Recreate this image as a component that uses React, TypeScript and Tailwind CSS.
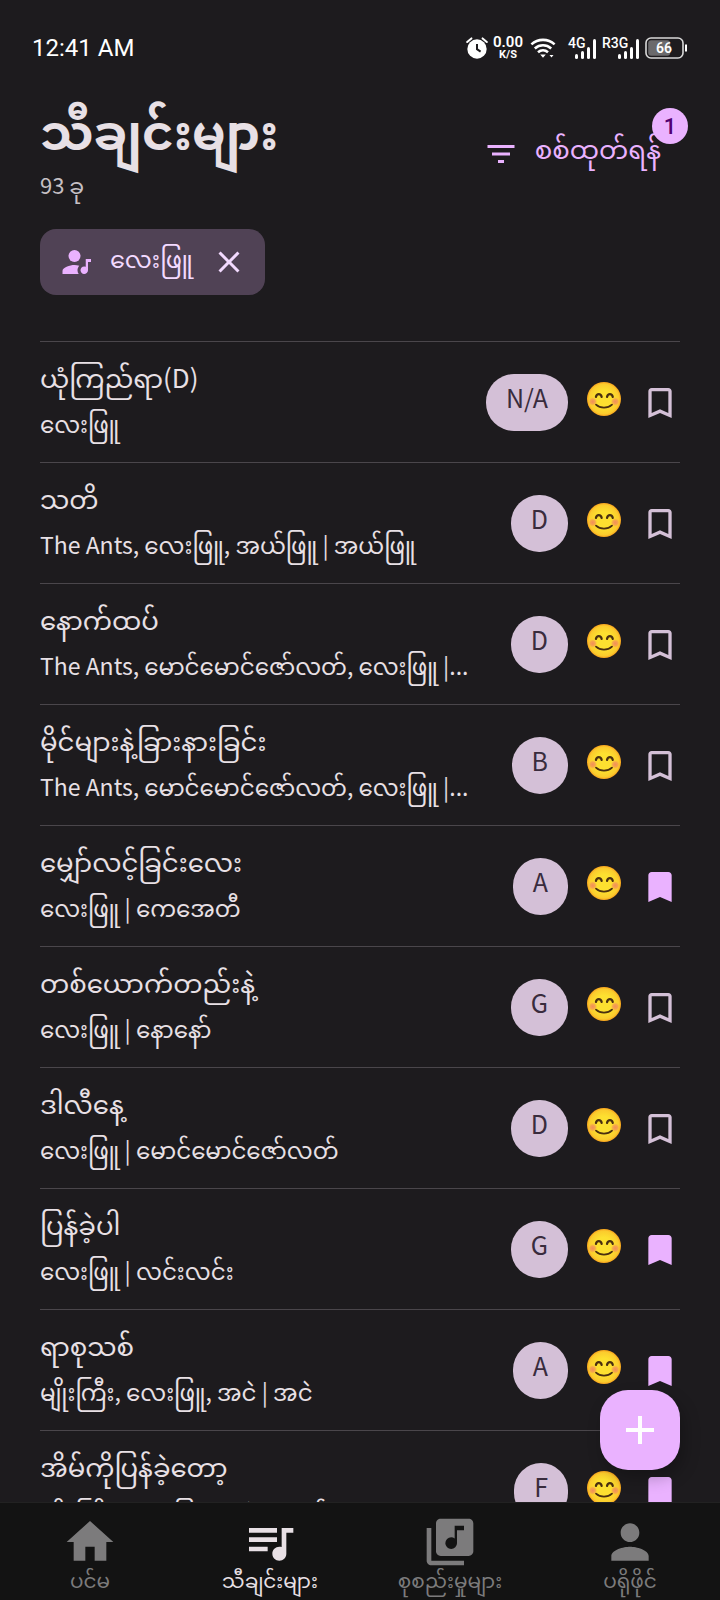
import { MdAdd, MdBookmark, MdBookmarkBorder, MdClose, MdFilterList, MdHome, MdLibraryMusic, MdPerson, MdQueueMusic } from 'react-icons/md';
import type { IconType } from 'react-icons';
import { useState } from 'react';
import clsx from 'clsx';

type Song = {
  id: number;
  title: string;
  artists: string;
  songKey: string;
  saved?: boolean;
};

const SONGS: Song[] = [
  { id: 1, title: 'ယုံကြည်ရာ(D)', artists: 'လေးဖြူ', songKey: 'N/A' },
  { id: 2, title: 'သတိ', artists: 'The Ants, လေးဖြူ, အယ်ဖြူ | အယ်ဖြူ', songKey: 'D' },
  { id: 3, title: 'နောက်ထပ်', artists: 'The Ants, မောင်မောင်ဇော်လတ်, လေးဖြူ |...', songKey: 'D' },
  { id: 4, title: 'မိုင်များနဲ့ခြားနားခြင်း', artists: 'The Ants, မောင်မောင်ဇော်လတ်, လေးဖြူ |...', songKey: 'B' },
  { id: 5, title: 'မျှော်လင့်ခြင်းလေး', artists: 'လေးဖြူ | ကေအေတီ', songKey: 'A', saved: true },
  { id: 6, title: 'တစ်ယောက်တည်းနဲ့', artists: 'လေးဖြူ | နောနော်', songKey: 'G' },
  { id: 7, title: 'ဒါလီနေ့', artists: 'လေးဖြူ | မောင်မောင်ဇော်လတ်', songKey: 'D' },
  { id: 8, title: 'ပြန်ခဲ့ပါ', artists: 'လေးဖြူ | လင်းလင်း', songKey: 'G', saved: true },
  { id: 9, title: 'ရာစုသစ်', artists: 'မျိုးကြီး, လေးဖြူ, အငဲ | အငဲ', songKey: 'A', saved: true },
  { id: 10, title: 'အိမ်ကိုပြန်ခဲ့တော့', artists: 'မျိုးကြီး, လေးဖြူ, အငဲ | မောင်', songKey: 'F', saved: true },
];

const TABS: { label: string; Icon: IconType }[] = [
  { label: 'ပင်မ', Icon: MdHome },
  { label: 'သီချင်းများ', Icon: MdQueueMusic },
  { label: 'စုစည်းမှုများ', Icon: MdLibraryMusic },
  { label: 'ပရိုဖိုင်', Icon: MdPerson },
];

function StatusBar() {
  return (
    <div className="flex h-24 shrink-0 items-center justify-between px-8 font-['Roboto',sans-serif] text-white">
      <span className="text-2xl">12:41 AM</span>
      <div className="flex items-center">
        <svg viewBox="0 0 22 22" className="h-[22px] w-[22px]" aria-hidden="true">
          <circle cx="11" cy="12" r="9.7" fill="#fff" />
          <path d="M1.2 5 5.4 1.4M20.8 5 16.6 1.4" stroke="#fff" strokeWidth="2" strokeLinecap="round" />
          <path d="M11 7v5.2l3.6 2.4" fill="none" stroke="#1d1b1e" strokeWidth="2" />
        </svg>
        <div className="ml-1.5 flex w-7 flex-col items-center text-[15px] leading-[14px] font-semibold">
          <span>0.00</span>
          <span className="text-[11px] leading-3 font-bold">K/S</span>
        </div>
        <svg viewBox="0 0 26 22" className="ml-2 h-[22px] w-[26px]" fill="none" stroke="#fff" strokeWidth="2.6" aria-hidden="true">
          <path d="M1.4 7.4c6.6-6 16.6-6 23.2 0M4.8 11.4c4.8-4.2 11.6-4.2 16.4 0M8 15.2c3-2.6 7-2.6 10 0" />
          <path d="M10.2 17.6h5.6L13 20.8zM19.5 18h4l-2 2.6z" fill="#fff" stroke="none" />
        </svg>
        <Signal label="4G" className="ml-3 w-7" />
        <Signal label="R3G" className="ml-1.5 w-[37px]" />
        <svg viewBox="0 0 43 22" className="ml-1.5 h-[22px] w-[43px]" aria-hidden="true">
          <rect x="1" y="1" width="37" height="20" rx="5" fill="none" stroke="#d8d8d8" strokeWidth="1.6" />
          <rect x="3.2" y="3.2" width="22" height="15.6" rx="3" fill="#6b6a6c" />
          <rect x="40" y="7.5" width="2" height="7" fill="#fff" />
          <text x="19" y="16" textAnchor="middle" fill="#fff" fontSize="14" fontWeight="600">66</text>
        </svg>
      </div>
    </div>
  );
}

function Signal({ label, className }: { label: string; className: string }) {
  return (
    <div className={clsx('relative flex h-[22px] items-end justify-end gap-[3px]', className)}>
      <span className="absolute top-0 left-0 text-sm leading-3 font-medium">{label}</span>
      <span className="h-[5px] w-[3px] rounded-sm bg-white" />
      <span className="h-2 w-[3px] rounded-sm bg-white" />
      <span className="h-3 w-[3px] rounded-sm bg-white" />
      <span className="h-5 w-[3px] rounded-sm bg-white" />
    </div>
  );
}

function AccountMusicIcon() {
  return (
    <svg viewBox="0 0 24 24" className="h-9 w-9 fill-[#eab2ff]" aria-hidden="true">
      <path d="M11 14c1 0 2.05.16 3.2.44-.81.87-1.2 1.89-1.2 3.06 0 .89.25 1.73.78 2.5H3v-2c0-1.19.91-2.15 2.74-2.88C7.57 14.38 9.33 14 11 14Z" />
      <circle cx="11" cy="8" r="4" />
      <path d="M18.5 10H22v2h-2v5.5a2.5 2.5 0 1 1-1.5-2.29V10Z" />
    </svg>
  );
}

function SmileIcon() {
  return (
    <svg viewBox="0 0 34 34" className="h-[34px] w-[34px]" role="img" aria-label="Easy">
      <defs>
        <radialGradient id="smile-face" cx="50%" cy="50%" r="50%">
          <stop offset="0.5" stopColor="#fde030" />
          <stop offset="0.88" stopColor="#fbcb2d" />
          <stop offset="1" stopColor="#f6a11d" />
        </radialGradient>
        <radialGradient id="smile-blush">
          <stop offset="0" stopColor="#ef7a66" stopOpacity="0.8" />
          <stop offset="0.6" stopColor="#f28a5c" stopOpacity="0.6" />
          <stop offset="1" stopColor="#f9a84a" stopOpacity="0" />
        </radialGradient>
      </defs>
      <circle cx="17" cy="17" r="17" fill="url(#smile-face)" />
      <circle cx="5.8" cy="19.5" r="4.4" fill="url(#smile-blush)" />
      <circle cx="28.2" cy="19.5" r="4.4" fill="url(#smile-blush)" />
      <path
        d="M8.9 14.9c.8-3.8 5-3.8 5.8 0M20 14.9c.8-3.8 5-3.8 5.8 0"
        fill="none"
        stroke="#4a2f10"
        strokeWidth="2.2"
        strokeLinecap="round"
      />
      <path d="M9 22.6c4.4 4 11.6 4 16 0" fill="none" stroke="#4a2f10" strokeWidth="1.8" strokeLinecap="round" />
    </svg>
  );
}

function SongRow({ song }: { song: Song }) {
  const [saved, setSaved] = useState(Boolean(song.saved));
  const Bookmark = saved ? MdBookmark : MdBookmarkBorder;

  return (
    <li className="flex h-[121px] shrink-0 items-center border-t border-[#4a464b]">
      <div className="min-w-0 flex-1 pb-1">
        <h2 className="truncate text-[26px] leading-[48px]">{song.title}</h2>
        <p className="-mt-0.5 truncate text-[23px] leading-[48px]">{song.artists}</p>
      </div>
      <span className="ml-4 flex h-[57px] shrink-0 items-center rounded-[28px] bg-[#d4c0d7] px-5 pb-2 text-[25px] text-[#392c3d]">
        {song.songKey}
      </span>
      <span className="ml-[19px] shrink-0 pb-1.5">
        <SmileIcon />
      </span>
      <button
        type="button"
        aria-label="Bookmark"
        aria-pressed={saved}
        onClick={() => setSaved(!saved)}
        className="ml-[19px] shrink-0 pt-0.5"
      >
        <Bookmark className={clsx('h-10 w-10', saved ? 'text-[#eab2ff]' : 'text-[#d4c0d7]')} />
      </button>
    </li>
  );
}

export default function App() {
  const [activeTab, setActiveTab] = useState(1);

  return (
    <div className="flex h-screen flex-col bg-[#1d1b1e] font-['Noto_Sans_CJK_KR','Noto_Sans_Myanmar',sans-serif] text-[#e8e0e5]">
      <StatusBar />

      <main className="relative flex min-h-0 flex-1 flex-col px-10">
        <header className="flex h-[110px] shrink-0 items-start justify-between">
          <div>
            <h1 className="pb-1.5 text-5xl leading-[66px] font-bold">သီချင်းများ</h1>
            <p className="text-[22px] leading-8 text-[#c6c0c5]">93 ခု</p>
          </div>
          <button type="button" className="relative mt-[34px] mr-[19px] flex h-12 items-center gap-4 text-[26px] text-[#eab2ff]">
            <MdFilterList className="h-9 w-9" />
            <span className="pb-3 leading-10">စစ်ထုတ်ရန်</span>
            <span className="absolute -top-[22px] -right-[27px] flex h-9 w-9 items-center justify-center rounded-full bg-[#eab2ff] font-['Roboto',sans-serif] text-[22px] font-medium text-[#520071]">
              1
            </span>
          </button>
        </header>

        <div className="mt-[23px] flex h-[66px] shrink-0">
          <div className="flex items-center rounded-2xl bg-[#504255] pr-[18px] pl-[18px] text-2xl text-[#f3daff]">
            <AccountMusicIcon />
            <span className="ml-4 pb-2 leading-10">လေးဖြူ</span>
            <button type="button" aria-label="Remove filter" className="ml-[18px]">
              <MdClose className="h-9 w-9" />
            </button>
          </div>
        </div>

        <ul className="mt-[46px] flex min-h-0 flex-1 flex-col overflow-hidden">
          {SONGS.map((song) => (
            <SongRow key={song.id} song={song} />
          ))}
        </ul>

        <button
          type="button"
          aria-label="Add song"
          className="absolute right-10 bottom-8 flex h-20 w-20 items-center justify-center rounded-[28px] bg-[#eab2ff] text-white shadow-[4px_8px_16px_rgba(0,0,0,0.25)]"
        >
          <MdAdd className="h-12 w-12" />
        </button>
      </main>

      <nav className="grid h-[98px] shrink-0 grid-cols-4 border-t border-[#222] bg-[#131313]">
        {TABS.map(({ label, Icon }, index) => (
          <button
            key={label}
            type="button"
            onClick={() => setActiveTab(index)}
            className={clsx('flex flex-col items-center pt-[11px]', index === activeTab ? 'text-[#e8e0e5]' : 'text-[#7c7b7c]')}
          >
            <Icon className="h-14 w-14 shrink-0" />
            <span className="text-xl leading-5">{label}</span>
          </button>
        ))}
      </nav>
    </div>
  );
}
